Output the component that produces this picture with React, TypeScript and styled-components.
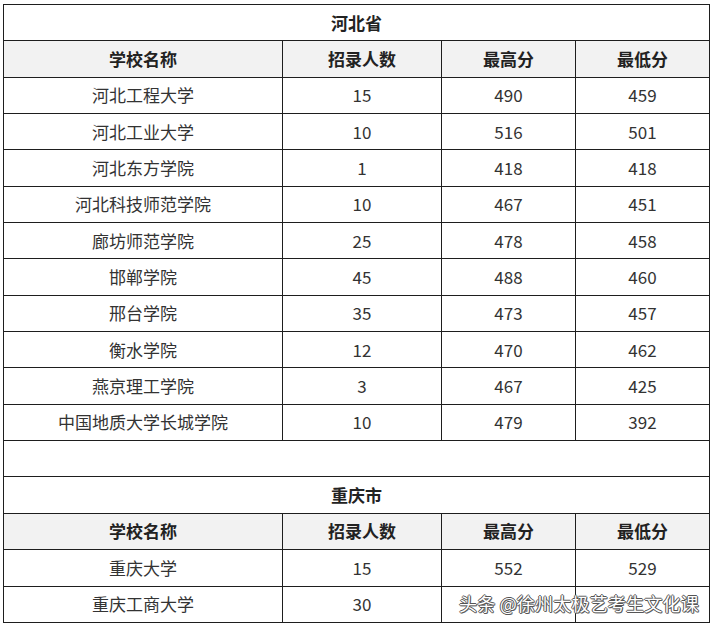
import React from 'react';
import styled, { createGlobalStyle } from 'styled-components';

const GlobalStyle = createGlobalStyle`
  html, body {
    margin: 0;
    padding: 0;
    background: #fff;
  }
  body {
    font-family: "Noto Sans CJK SC", "Microsoft YaHei", sans-serif;
  }
`;

const Page = styled.div`
  position: relative;
  width: 714px;
  height: 628px;
  padding: 4px 0 0 3px;
  box-sizing: border-box;
  background: #fff;
`;

const Table = styled.table`
  width: 706px;
  border-collapse: collapse;
  table-layout: fixed;
  font-size: 17px;
  color: #333;
`;

const Row = styled.tr`
  height: 36.35px;
`;

const Cell = styled.td<{ $head?: boolean }>`
  border: 1px solid #1e1e1e;
  padding: 0;
  text-align: center;
  vertical-align: middle;
  line-height: 20px;
  font-weight: ${({ $head }) => ($head ? 700 : 400)};
  color: ${({ $head }) => ($head ? '#222' : '#333')};
  background: ${({ $head }) => ($head ? '#f2f2f2' : '#fff')};
`;

const Title = styled.td`
  border: 1px solid #1e1e1e;
  padding: 0;
  text-align: center;
  vertical-align: middle;
  line-height: 20px;
  font-weight: 700;
  color: #222;
`;

const Watermark = styled.div`
  position: absolute;
  left: 459px;
  top: 590px;
  font-size: 18px;
  letter-spacing: 0.2px;
  color: #fff;
  font-family: "Noto Sans CJK SC", sans-serif;
  text-shadow:
    -1px 0 #555, 1px 0 #555, 0 -1px #555, 0 1px #555,
    1px 1px #777;
  white-space: nowrap;
`;

type School = [string, number, number, number];

const hebei: School[] = [
  ['河北工程大学', 15, 490, 459],
  ['河北工业大学', 10, 516, 501],
  ['河北东方学院', 1, 418, 418],
  ['河北科技师范学院', 10, 467, 451],
  ['廊坊师范学院', 25, 478, 458],
  ['邯郸学院', 45, 488, 460],
  ['邢台学院', 35, 473, 457],
  ['衡水学院', 12, 470, 462],
  ['燕京理工学院', 3, 467, 425],
  ['中国地质大学长城学院', 10, 479, 392],
];

const chongqing: School[] = [
  ['重庆大学', 15, 552, 529],
  ['重庆工商大学', 30, 0, 0],
];

const headers = ['学校名称', '招录人数', '最高分', '最低分'];

function Section({ name, rows }: { name: string; rows: School[] }) {
  return (
    <>
      <Row>
        <Title colSpan={4}>{name}</Title>
      </Row>
      <Row>
        {headers.map(h => (
          <Cell $head key={h}>{h}</Cell>
        ))}
      </Row>
      {rows.map(r => (
        <Row key={r[0]}>
          <Cell>{r[0]}</Cell>
          <Cell>{r[1]}</Cell>
          <Cell>{r[2] || ''}</Cell>
          <Cell>{r[3] || ''}</Cell>
        </Row>
      ))}
    </>
  );
}

function App() {
  return (
    <Page>
      <GlobalStyle />
      <Table>
        <colgroup>
          <col style={{ width: 279 }} />
          <col style={{ width: 159 }} />
          <col style={{ width: 134 }} />
          <col style={{ width: 134 }} />
        </colgroup>
        <tbody>
          <Section name="河北省" rows={hebei} />
          <Row>
            <Title colSpan={4}></Title>
          </Row>
          <Section name="重庆市" rows={chongqing} />
        </tbody>
      </Table>
      <Watermark>头条 @徐州太极艺考生文化课</Watermark>
    </Page>
  );
}

export default App;
